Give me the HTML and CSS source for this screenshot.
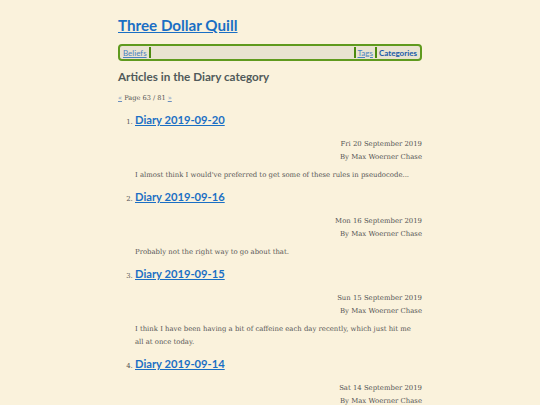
FILE: index.html
```html
<!DOCTYPE html>
<html>
<head>
<meta charset="utf-8">
<link rel="stylesheet" href="styles.css">
</head>
<body>
<div class="page">
  <h1 class="site-title"><a href="#">Three Dollar Quill</a></h1>
  <nav class="menu">
    <a class="menu-link" href="#">Beliefs</a>
    <span class="sep"></span>
    <span class="filler"></span>
    <span class="sep"></span>
    <a class="menu-link" href="#">Tags</a>
    <span class="sep"></span>
    <a class="menu-link current" href="#">Categories</a>
  </nav>
  <h2 class="cat-title">Articles in the Diary category</h2>
  <p class="pager"><a href="#">«</a> Page 63 / 81 <a href="#">»</a></p>
  <ol class="articles" start="1">
    <li class="article">
      <h3 class="a-title"><a href="#">Diary 2019-09-20</a></h3>
      <div class="meta"><div>Fri 20 September 2019</div><div>By Max Woerner Chase</div></div>
      <p class="summary">I almost think I would've preferred to get some of these rules in pseudocode...</p>
    </li>
    <li class="article">
      <h3 class="a-title"><a href="#">Diary 2019-09-16</a></h3>
      <div class="meta"><div>Mon 16 September 2019</div><div>By Max Woerner Chase</div></div>
      <p class="summary">Probably not the right way to go about that.</p>
    </li>
    <li class="article">
      <h3 class="a-title"><a href="#">Diary 2019-09-15</a></h3>
      <div class="meta"><div>Sun 15 September 2019</div><div>By Max Woerner Chase</div></div>
      <p class="summary">I think I have been having a bit of caffeine each day recently, which just hit me all at once today.</p>
    </li>
    <li class="article">
      <h3 class="a-title"><a href="#">Diary 2019-09-14</a></h3>
      <div class="meta"><div>Sat 14 September 2019</div><div>By Max Woerner Chase</div></div>
    </li>
  </ol>
</div>
</body>
</html>
```

FILE: styles.css
```css
html, body {
  margin: 0;
  padding: 0;
  background: #faf2dc;
}
body {
  font-family: "DejaVu Serif", serif;
  color: #555;
}
.page {
  width: 304px;
  margin: 0 auto;
  padding-top: 14px;
}
a {
  color: #1a6fc4;
}
.site-title {
  margin: 0;
  font-family: Lato, sans-serif;
  font-size: 15.2px;
  line-height: 22px;
  font-weight: 700;
}
.site-title a {
  color: #1a6fc4;
}
.menu {
  margin-top: 8px;
  height: 13px;
  border: 2px solid #5f9a1e;
  border-radius: 4px;
  background: #e9e3d1;
  display: flex;
  align-items: stretch;
  padding: 0 2px;
  font-family: Lato, sans-serif;
  font-size: 8px;
}
.menu-link {
  display: flex;
  align-items: center;
  padding: 0 1px;
  color: #4a82c0;
}
.menu-link.current {
  font-weight: 700;
  color: #1a5aa8;
  text-decoration: none;
}
.sep {
  width: 2px;
  background: #4c8a10;
  margin: 1px 1px;
}
.filler {
  flex: 1;
}
.cat-title {
  margin: 8px 0 0;
  font-family: Lato, sans-serif;
  font-size: 11.7px;
  line-height: 15px;
  color: #505a5a;
}
.pager {
  margin: 9px 0 0;
  font-size: 6.6px;
  line-height: 10px;
  color: #555;
}
.pager a {
  color: #6a8fc0;
}
.articles {
  margin: 9px 0 0;
  padding-left: 17px;
  font-size: 6.9px;
  color: #555;
}
.article {
  margin: 0;
}
.a-title {
  display: inline-block;
  margin: 0;
  font-family: Lato, sans-serif;
  font-size: 11.2px;
  line-height: 16px;
  font-weight: 700;
}
.meta {
  margin-top: 10px;
  text-align: right;
  font-size: 6.9px;
  line-height: 13px;
  color: #555;
}
.summary {
  margin: 5px 0 0;
  padding-right: 4px;
  font-size: 6.9px;
  line-height: 13px;
  color: #555;
  padding-bottom: 7px;
}
```
